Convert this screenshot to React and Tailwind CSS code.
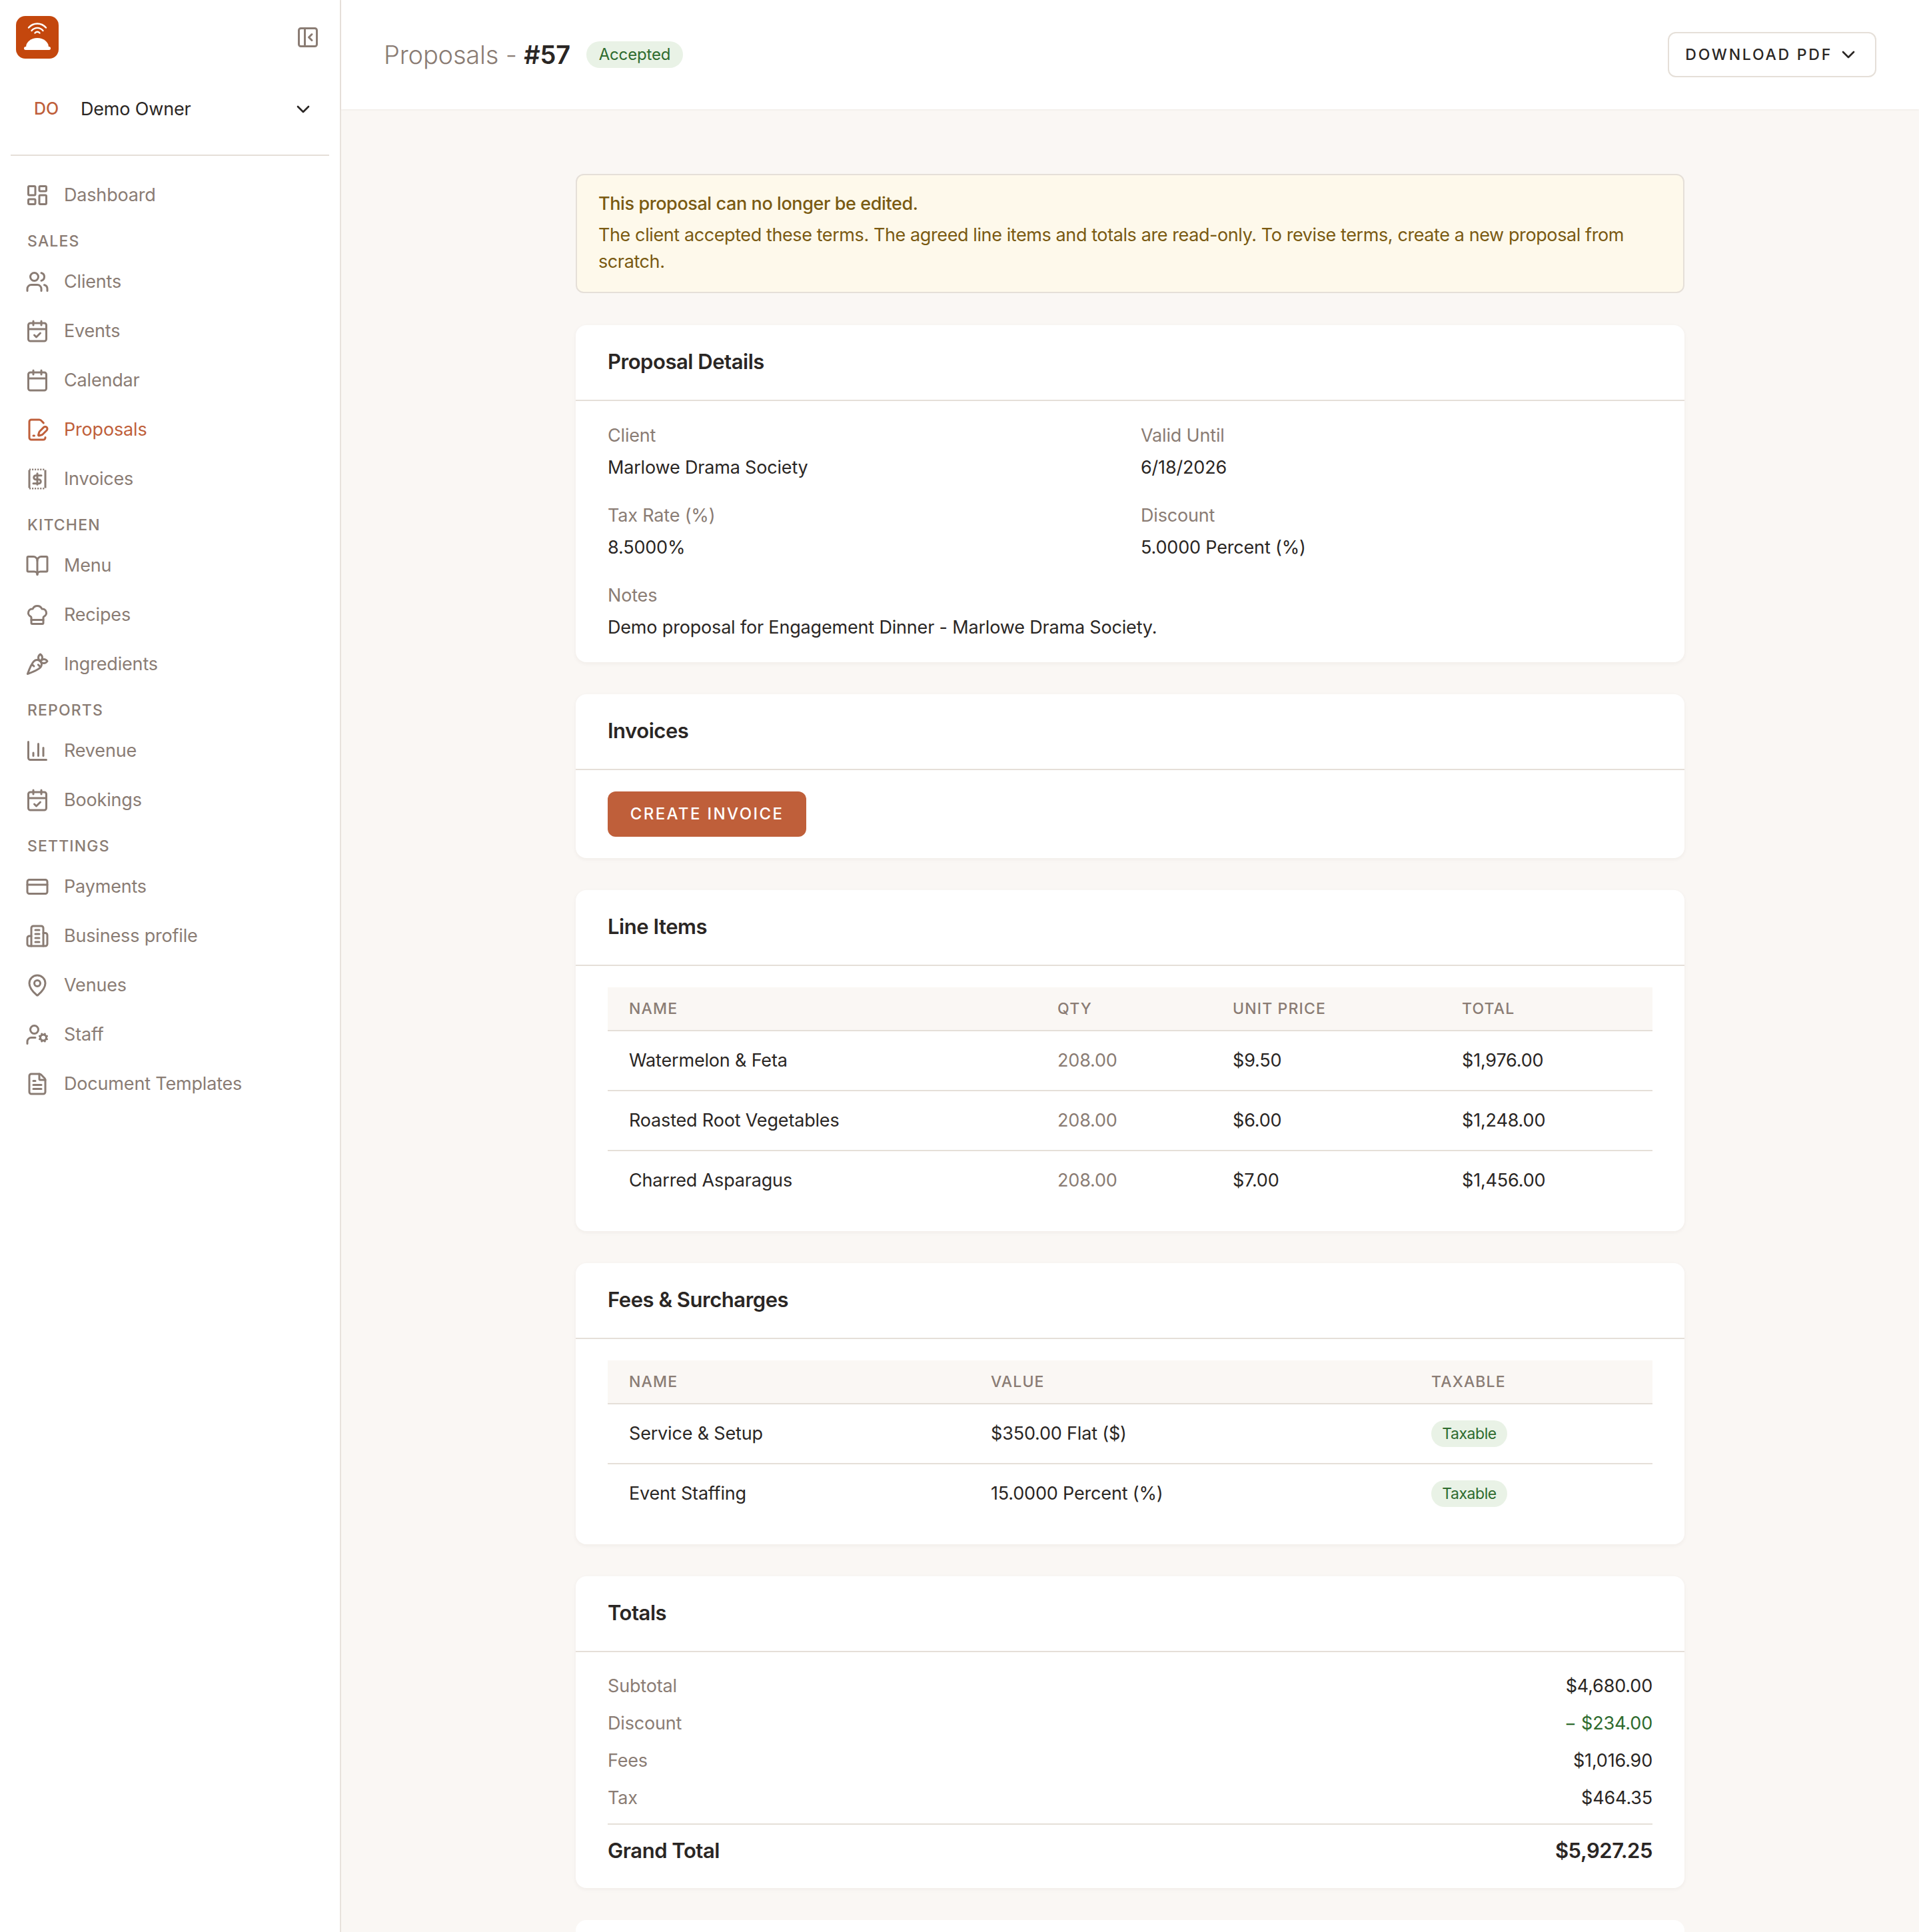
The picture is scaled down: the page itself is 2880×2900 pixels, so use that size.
import React from 'react';
import { LayoutDashboard, Users, CalendarCheck, Calendar, FilePenLine, BookOpen, ChefHat, Carrot, ChartColumn, CreditCard, MapPin, UserCog, FileText, PanelLeftClose, ChevronDown } from 'lucide-react';

const ReceiptIcon = ({ className }) => (
  <svg viewBox="0 0 24 24" fill="none" stroke="currentColor" strokeWidth="2" strokeLinejoin="round" className={className}>
    <path d="M4 2.5h16M4 21.5h16" strokeWidth="1.6" strokeDasharray="1.4 1.3" />
    <path d="M4 3v18M20 3v18" />
    <path d="M16 8.5h-5.5a2 2 0 0 0 0 4h3a2 2 0 0 1 0 4H8" strokeLinecap="round" />
    <path d="M12 6.5v11" strokeLinecap="round" />
  </svg>
);

const TowerIcon = ({ className }) => (
  <svg viewBox="0 0 24 24" fill="none" stroke="currentColor" strokeWidth="2" strokeLinecap="round" strokeLinejoin="round" className={className}>
    <path d="M6 22V4a2 2 0 0 1 2-2h8a2 2 0 0 1 2 2v18Z" />
    <path d="M6 12H4a2 2 0 0 0-2 2v6a2 2 0 0 0 2 2h2" />
    <path d="M18 9h2a2 2 0 0 1 2 2v9a2 2 0 0 1-2 2h-2" />
    <path d="M10 6h4M10 10h4M10 14h4M10 18h4" />
  </svg>
);

const Item = ({ icon: Icon, label, active }) => (
  <div className={`flex h-[74px] items-center gap-[22px] pl-[22px] text-[27px] ${active ? 'text-[#bf5f3a]' : 'text-[#8a7c74]'}`}>
    <Icon className="h-[36px] w-[36px] shrink-0" />
    <span>{label}</span>
  </div>
);

const Section = ({ label }) => (
  <div className="pl-[25px] pt-[16px] pb-[8px] text-[23px] leading-[32px] font-medium uppercase tracking-[0.05em] text-[#8a7c74]">{label}</div>
);

const Card = ({ title, children, bodyClass = 'px-[48px] py-[32px]' }) => (
  <section className="rounded-[16px] bg-white shadow-[0_2px_6px_rgba(60,40,20,0.05)]">
    <h2 className="border-b-2 border-[#e5dfd8] px-[48px] pt-[31px] pb-[33px] text-[31px] leading-[48px] font-semibold tracking-[-0.015em] text-[#2a2624]">{title}</h2>
    <div className={bodyClass}>{children}</div>
  </section>
);

const Field = ({ label, value, className = '' }) => (
  <div className={className}>
    <div className="text-[27px] leading-[40px] text-[#8a7c74]">{label}</div>
    <div className="mt-[8px] text-[27px] leading-[40px] text-[#2a2624]">{value}</div>
  </div>
);

const Th = ({ children, className }) => (
  <th className={`border-b-2 border-[#e5dfd8] bg-[#faf7f4] px-[32px] pt-[12px] pb-[12px] text-left text-[23px] leading-[40px] font-medium uppercase tracking-[0.05em] text-[#8a7c74] ${className}`}>{children}</th>
);

const Td = ({ children, muted, last }) => (
  <td className={`px-[32px] py-[24px] text-[27px] leading-[40px] ${last ? '' : 'border-b-2 border-[#e5dfd8]'} ${muted ? 'text-[#8a7c74]' : 'text-[#2a2624]'}`}>{children}</td>
);

const Pill = ({ children }) => (
  <span className="flex h-[40px] w-[114px] items-center justify-center rounded-full bg-[#e9f2e6] text-[23px] tracking-[-0.02em] text-[#2e6b2e]">{children}</span>
);

const TotalRow = ({ label, value, green }) => (
  <div className="flex justify-between text-[27px] leading-[40px]">
    <span className="text-[#8a7c74]">{label}</span>
    <span className={green ? 'text-[#2e6b2e]' : 'text-[#2a2624]'}>{value}</span>
  </div>
);

const lineItems = [
  ['Watermelon & Feta', '208.00', '$9.50', '$1,976.00'],
  ['Roasted Root Vegetables', '208.00', '$6.00', '$1,248.00'],
  ['Charred Asparagus', '208.00', '$7.00', '$1,456.00'],
];

export default function App() {
  return (
    <div className="flex h-[2900px] overflow-hidden bg-[#faf7f4] font-['Inter','Noto_Sans',sans-serif] tracking-[-0.011em]">
      <aside className="h-full w-[512px] shrink-0 border-r-2 border-[#e8e2dc] bg-white px-[16px]">
        <div className="flex h-[112px] items-center justify-between pl-[8px] pr-[14px]">
          <svg viewBox="0 0 64 64" className="h-[64px] w-[64px]">
            <rect width="64" height="64" rx="14" fill="#c4470d" />
            <path d="M15 47a17 14 0 0 1 34 0z" fill="#fff" />
            <rect x="12" y="46" width="40" height="5" rx="2.5" fill="#fff" />
            <g fill="none" stroke="#fff" strokeWidth="2.4" strokeLinecap="round">
              <path d="M19 17.5C26 9.5 38 9.5 45 17.5" />
              <path d="M23.5 22C28 16.5 36 16.5 40.5 22" />
              <path d="M28.5 25.5C30.5 23.2 33.5 23.2 35.5 25.5" />
            </g>
          </svg>
          <PanelLeftClose className="h-[36px] w-[36px] text-[#8a7c74]" />
        </div>
        <div className="flex h-[104px] items-center pl-[35px] pr-[23px]">
          <span className="w-[70px] text-[25px] font-medium tracking-normal text-[#bf5f3a]">DO</span>
          <span className="flex-1 text-[27px] text-[#2a2624]">Demo Owner</span>
          <ChevronDown className="h-[32px] w-[32px] text-[#2a2624]" />
        </div>
        <div className="mt-[16px] mb-[22px] h-[2px] bg-[#e5dfd8]" />
        <Item icon={LayoutDashboard} label="Dashboard" />
        <Section label="Sales" />
        <Item icon={Users} label="Clients" />
        <Item icon={CalendarCheck} label="Events" />
        <Item icon={Calendar} label="Calendar" />
        <Item icon={FilePenLine} label="Proposals" active />
        <Item icon={ReceiptIcon} label="Invoices" />
        <Section label="Kitchen" />
        <Item icon={BookOpen} label="Menu" />
        <Item icon={ChefHat} label="Recipes" />
        <Item icon={Carrot} label="Ingredients" />
        <Section label="Reports" />
        <Item icon={ChartColumn} label="Revenue" />
        <Item icon={CalendarCheck} label="Bookings" />
        <Section label="Settings" />
        <Item icon={CreditCard} label="Payments" />
        <Item icon={TowerIcon} label="Business profile" />
        <Item icon={MapPin} label="Venues" />
        <Item icon={UserCog} label="Staff" />
        <Item icon={FileText} label="Document Templates" />
      </aside>
      <main className="min-w-0 flex-1">
        <header className="flex h-[164px] items-center justify-between bg-white px-[64px] shadow-[0_1px_3px_rgba(60,40,20,0.06)]">
          <div className="flex items-center gap-[24px]">
            <h1 className="text-[38px] leading-[56px] font-light text-[#8a7c74]">Proposals - <span className="font-semibold text-[#2a2624]">#57</span></h1>
            <span className="inline-flex h-[40px] w-[145px] items-center justify-center rounded-full bg-[#e9f2e6] text-[24px] text-[#2e6b2e]">Accepted</span>
          </div>
          <button className="flex h-[68px] items-center gap-[8px] rounded-[12px] border-2 border-[#e5dfd8] bg-white pr-[24px] pl-[24px] text-[23px] font-medium tracking-[0.12em] text-[#2a2624]">
            DOWNLOAD PDF <ChevronDown className="h-[32px] w-[32px]" />
          </button>
        </header>
        <div className="mx-auto flex w-[1664px] flex-col gap-[48px] pt-[97px]">
          <div className="rounded-[12px] border-2 border-[#e5dfd8] bg-[#fef9eb] px-[32px] pt-[23px] pb-[25px] text-[27px] leading-[40px] tracking-[-0.015em] text-[#7a5a12]">
            <div className="mb-[7px] font-medium">This proposal can no longer be edited.</div>
            <div>The client accepted these terms. The agreed line items and totals are read-only. To revise terms, create a new proposal from scratch.</div>
          </div>
          <Card title="Proposal Details">
            <div className="grid grid-cols-2 gap-x-[32px] gap-y-[32px]">
              <Field label="Client" value="Marlowe Drama Society" />
              <Field label="Valid Until" value="6/18/2026" />
              <Field label="Tax Rate (%)" value="8.5000%" />
              <Field label="Discount" value="5.0000 Percent (%)" />
              <Field className="col-span-2" label="Notes" value="Demo proposal for Engagement Dinner - Marlowe Drama Society." />
            </div>
          </Card>
          <Card title="Invoices">
            <button className="h-[68px] w-[298px] rounded-[12px] bg-[#bf5f3a] text-[24px] font-medium tracking-[0.1em] text-white">CREATE INVOICE</button>
          </Card>
          <Card title="Line Items">
            <table className="w-full table-fixed border-collapse">
              <thead><tr>
                <Th className="w-[643px]">Name</Th><Th className="w-[263px]">Qty</Th><Th className="w-[344px]">Unit Price</Th><Th>Total</Th>
              </tr></thead>
              <tbody>
                {lineItems.map((r, i) => (
                  <tr key={r[0]}>
                    <Td last={i === 2}>{r[0]}</Td><Td last={i === 2} muted>{r[1]}</Td><Td last={i === 2}>{r[2]}</Td><Td last={i === 2}>{r[3]}</Td>
                  </tr>
                ))}
              </tbody>
            </table>
          </Card>
          <Card title="Fees & Surcharges">
            <table className="w-full table-fixed border-collapse">
              <thead><tr>
                <Th className="w-[543px]">Name</Th><Th className="w-[661px]">Value</Th><Th>Taxable</Th>
              </tr></thead>
              <tbody>
                <tr><Td>Service & Setup</Td><Td>$350.00 Flat ($)</Td><Td><Pill>Taxable</Pill></Td></tr>
                <tr><Td last>Event Staffing</Td><Td last>15.0000 Percent (%)</Td><Td last><Pill>Taxable</Pill></Td></tr>
              </tbody>
            </table>
          </Card>
          <Card title="Totals" bodyClass="px-[48px] pt-[31px] pb-[32px]">
            <div className="flex flex-col gap-[16px]">
              <TotalRow label="Subtotal" value="$4,680.00" />
              <TotalRow label="Discount" value="− $234.00" green />
              <TotalRow label="Fees" value="$1,016.90" />
              <TotalRow label="Tax" value="$464.35" />
            </div>
            <div className="mt-[18px] flex justify-between border-t-2 border-[#e5dfd8] pt-[15px] text-[31px] leading-[48px] font-semibold tracking-[-0.015em] text-[#2a2624]">
              <span>Grand Total</span><span>$5,927.25</span>
            </div>
          </Card>
          <section className="h-[120px] shrink-0 rounded-[16px] bg-white" />
        </div>
      </main>
    </div>
  );
}
